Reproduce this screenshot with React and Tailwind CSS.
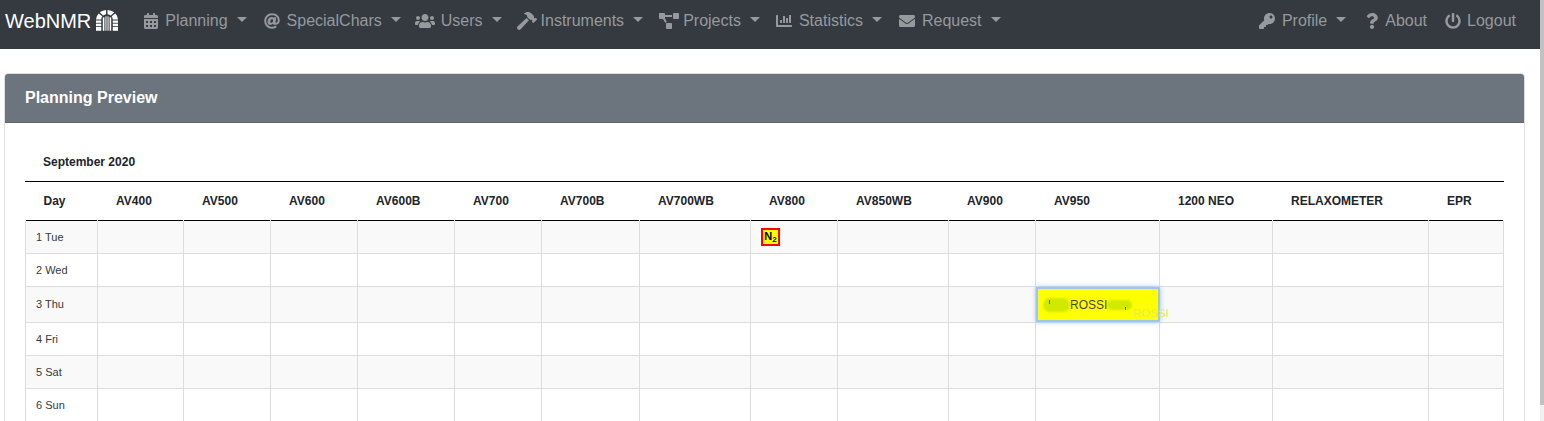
import React from 'react'
import { FaCalendarAlt, FaAt, FaUsers, FaHammer, FaProjectDiagram, FaChartBar, FaEnvelope, FaKey, FaQuestion, FaPowerOff } from 'react-icons/fa'

const left = [
  { label: 'Planning', Icon: FaCalendarAlt, size: 16, gap: 'ml-[6px]', end: 'mr-[1px]' },
  { label: 'SpecialChars', Icon: FaAt, size: 16, gap: 'ml-[7px]', end: 'mr-[-2px]' },
  { label: 'Users', Icon: FaUsers, size: 20, gap: 'ml-[6px]', end: 'mr-[-1px]' },
  { label: 'Instruments', Icon: FaHammer, size: 20, gap: 'ml-[4px]', end: '' },
  { label: 'Projects', Icon: FaProjectDiagram, size: 20, gap: 'ml-[4px]', end: '' },
  { label: 'Statistics', Icon: FaChartBar, size: 16, gap: 'ml-[7px]', end: 'mr-[1px]' },
  { label: 'Request', Icon: FaEnvelope, size: 16, gap: 'ml-[7px]', end: '' },
]

const columns = [
  { name: 'AV400', w: 'w-[86px]' },
  { name: 'AV500', w: 'w-[87px]' },
  { name: 'AV600', w: 'w-[87px]' },
  { name: 'AV600B', w: 'w-[97px]' },
  { name: 'AV700', w: 'w-[87px]' },
  { name: 'AV700B', w: 'w-[98px]' },
  { name: 'AV700WB', w: 'w-[111px]' },
  { name: 'AV800', w: 'w-[87px]' },
  { name: 'AV850WB', w: 'w-[111px]' },
  { name: 'AV900', w: 'w-[87px]' },
  { name: 'AV950', w: 'w-[124px]' },
  { name: '1200 NEO', w: 'w-[113px]' },
  { name: 'RELAXOMETER', w: 'w-[156px]' },
  { name: 'EPR', w: 'w-[75px]' },
]

const days = [
  { label: '1 Tue', h: 'h-[33px]', pt: 'pt-[2px]' },
  { label: '2 Wed', h: 'h-[33px]', pt: 'pt-[2px]' },
  { label: '3 Thu', h: 'h-[36px]', pt: '' },
  { label: '4 Fri', h: 'h-[33px]', pt: 'pt-[2px]' },
  { label: '5 Sat', h: 'h-[33px]', pt: 'pt-[2px]' },
  { label: '6 Sun', h: 'h-[33px]', pt: 'pt-[2px]' },
]

const Caret = () => <span className="ml-[9px] w-0 h-0 border-x-[5px] border-x-transparent border-t-[5px] border-t-[#96999d] mt-[-2px]" />

const Logo = () => (
  <svg width="22" height="21" viewBox="0 0 21 20" fill="#fff" className="ml-[5px]">
    <path d="M0 9 A10.5 9 0 0 1 2.6 3.2 L6 6 A6 6 0 0 0 5 9 Z" />
    <path d="M3.6 2.2 A10.5 9 0 0 1 9.6 0 L9.6 4 A6 6 0 0 0 6.8 5.2 Z" />
    <path d="M11 0 A10.5 9 0 0 1 17.4 2.2 L14.2 5.2 A6 6 0 0 0 11 4 Z" />
    <path d="M18.4 3.2 A10.5 9 0 0 1 21 9 L16 9 A6 6 0 0 0 15 6 Z" />
    <rect x="0" y="10" width="5" height="2.2" />
    <rect x="0" y="13" width="5" height="2.2" />
    <rect x="0" y="16" width="5" height="3.8" />
    <rect x="16" y="10" width="5" height="2.2" />
    <rect x="16" y="13" width="5" height="2.2" />
    <rect x="16" y="16" width="5" height="3.8" />
    <rect x="6.5" y="7" width="1.5" height="12.8" />
    <rect x="9" y="6" width="1" height="13.8" />
    <rect x="11" y="6" width="1" height="13.8" />
    <rect x="13" y="7" width="1.5" height="12.8" />
  </svg>
)

const NavItem = ({ label, Icon, size = 16, gap = 'ml-[7px]', end = '', caret }) => (
  <a className={`flex items-center text-[#96999d] px-2 h-[40px] ${end}`} href="#">
    <Icon size={size} className="shrink-0" />
    <span className={gap}>{label}</span>
    {caret && <Caret />}
  </a>
)

export default function App() {
  return (
    <div className="h-[421px] overflow-hidden bg-white flex font-['Liberation_Sans',Arial,sans-serif]">
      <div className="w-[1540px] shrink-0">
        <nav className="h-[49px] bg-[#343a40] flex items-center pl-[5px] pr-[16px] pb-2 text-[16px]">
          <a className="flex items-center text-white text-[20px] mr-[25px]" href="#">WebNMR<Logo /></a>
          <div className="flex items-center ml-[-8px]">
            {left.map((m) => <NavItem key={m.label} {...m} caret />)}
          </div>
          <div className="flex-1" />
          <div className="flex items-center">
            <NavItem label="Profile" Icon={FaKey} end="mr-[2px]" caret />
            <NavItem label="About" Icon={FaQuestion} gap="ml-[5px]" end="mr-[2px]" />
            <NavItem label="Logout" Icon={FaPowerOff} gap="ml-[6px]" />
          </div>
        </nav>

        <div className="px-[4px] pt-[24px]">
          <div className="w-[1521px] border border-[#dfdfdf] rounded-[4px] h-[400px]">
            <div className="h-[49px] bg-[#6c757d] rounded-t-[3px] border-b border-[#5f666d] flex items-center pl-[20px] text-white font-bold text-[16px]">
              Planning Preview
            </div>
            <div className="px-[20px] pt-[32px]">
              <div className="text-[12px] font-bold text-[#212529] pl-[18px] h-[26px] leading-[14px]">September 2020</div>
              <div className="w-[1479px] border-t border-t-black">
                <table className="table-fixed border-collapse w-full text-[12px] text-[#212529]">
                  <thead>
                    <tr className="h-[38px]">
                      <th className="w-[72px] text-left pl-[18px] font-bold">Day</th>
                      {columns.map((c) => <th key={c.name} className={`${c.w} text-left pl-[18.5px] font-bold`}>{c.name}</th>)}
                    </tr>
                  </thead>
                  <tbody>
                    {days.map((d, i) => {
                      const line = i === 0 ? 'border border-[#dddddd] border-t-black' : 'border border-[#dddddd]'
                      return (
                        <tr key={d.label} className={`${d.h} ${i % 2 === 0 ? 'bg-[#f9f9f9]' : 'bg-white'}`}>
                          <td className={`${line} ${d.pt} pl-[10px] text-[11px] text-[#343a40]`}>{d.label}</td>
                          {columns.map((c) => (
                            <td key={c.name} className={`${line} p-0 relative`}>
                              {i === 0 && c.name === 'AV800' && (
                                <span className="absolute left-[10px] top-[7px] w-[19px] h-[18px] bg-[#ffff00] border-2 border-[#ff0000] flex items-center justify-center text-[11px] font-bold text-black leading-none">
                                  <span className="block leading-none">N<sub className="text-[8px] leading-none">2</sub></span>
                                </span>
                              )}
                              {i === 2 && c.name === 'AV950' && (
                                <div className="absolute left-0 top-0 w-[124px] h-[35px] bg-[#ffff00] border-2 border-[#9ec5ee] shadow-[0_0_5px_#9ec5ee] text-[12px] text-[#444]">
                                  <span className="absolute left-[5px] top-[9px] w-[27px] h-[14px] rounded-full bg-[#cfe900] blur-[1px]" />
                                  <span className="absolute left-[69px] top-[11px] w-[25px] h-[10px] rounded-full bg-[#cfe900] blur-[1px]" />
                                  <span className="absolute left-[11px] top-[11px] w-[1px] h-[4px] bg-[#555]" />
                                  <span className="absolute left-[87px] top-[18px] w-[1px] h-[3px] bg-[#555]" />
                                  <span className="absolute left-[32px] top-[9px] leading-[14px]">ROSSI</span>
                                  <span className="absolute left-[95px] top-[17px] leading-[14px] text-[11.5px] text-[#e4ec50]">ROSSI</span>
                                </div>
                              )}
                            </td>
                          ))}
                        </tr>
                      )
                    })}
                  </tbody>
                </table>
              </div>
            </div>
          </div>
        </div>
      </div>
      <div className="w-[4px] h-full bg-[#f1f1f1]">
        <div className="h-[405px] w-[4px] bg-[#c1c1c1]" />
      </div>
    </div>
  )
}
